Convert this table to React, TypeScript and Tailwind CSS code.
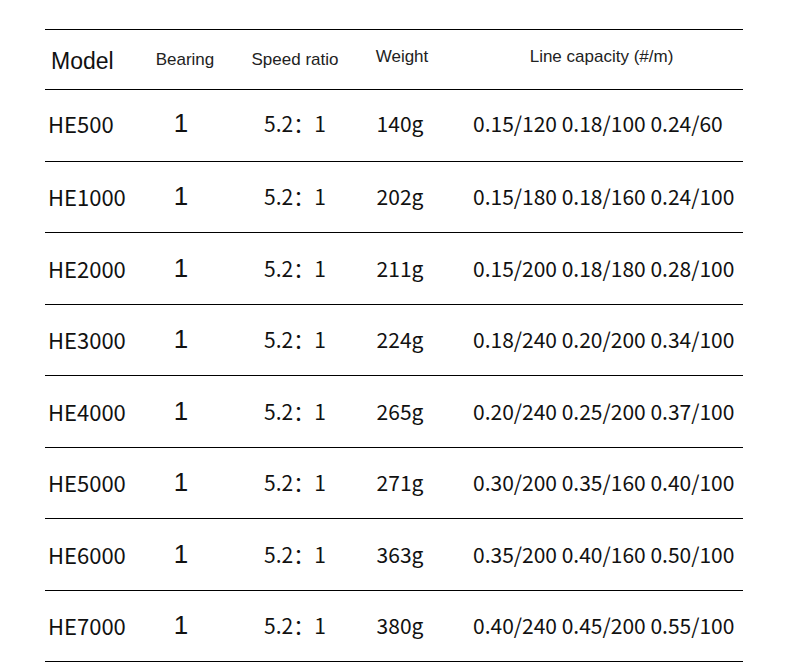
import React from "react";

const rows = [
  ["HE500", "140g", "0.15/120 0.18/100 0.24/60"],
  ["HE1000", "202g", "0.15/180 0.18/160 0.24/100"],
  ["HE2000", "211g", "0.15/200 0.18/180 0.28/100"],
  ["HE3000", "224g", "0.18/240 0.20/200 0.34/100"],
  ["HE4000", "265g", "0.20/240 0.25/200 0.37/100"],
  ["HE5000", "271g", "0.30/200 0.35/160 0.40/100"],
  ["HE6000", "363g", "0.35/200 0.40/160 0.50/100"],
  ["HE7000", "380g", "0.40/240 0.45/200 0.55/100"],
];

const cjk = { fontFamily: '"Noto Sans CJK SC", "Noto Sans", sans-serif' };
const arial = { fontFamily: '"Liberation Sans", Arial, sans-serif' };

export default function App() {
  return (
    <div className="w-[790px] h-[668px] bg-white text-black overflow-hidden">
      <div className="pt-[29px] pl-[45px]">
        <div className="w-[698px]">
          <div
            className="grid grid-cols-[95px_90px_130px_84px_299px] items-center h-[61px] border-t border-b border-black"
            style={arial}
          >
            <div className="pl-[6px] pt-[3px] text-[23px] text-[#111]">Model</div>
            <div className="text-center text-[17px] text-[#222] pt-[1px]">Bearing</div>
            <div className="text-center text-[17px] text-[#222] pt-[1px]">Speed ratio</div>
            <div className="text-center text-[17px] text-[#222] pb-[5px]">Weight</div>
            <div className="text-center text-[17px] text-[#222] pl-[16px] pb-[5px]">Line capacity (#/m)</div>
          </div>
          {rows.map(([m, w, c], i) => (
            <div
              key={m}
              className="grid grid-cols-[95px_90px_130px_84px_299px] items-center h-[71.5px] border-b border-black"
            >
              <div className={"pl-[3px] text-[22px] text-[#111] " + (i === 0 ? "pb-[4px]" : "")} style={cjk}>{m}</div>
              <div className={"text-center text-[26px] text-[#111] pr-[8px] " + (i === 0 ? "pb-[4px]" : "")} style={arial}>1</div>
              <div className={"text-center text-[21px] text-[#111] " + (i === 0 ? "pb-[4px]" : "")} style={cjk}>5.2：1</div>
              <div className={"text-center text-[21px] text-[#111] pr-[4px] " + (i === 0 ? "pb-[4px]" : "")} style={cjk}>{w}</div>
              <div className={"text-left text-[21px] text-[#111] pl-[29px] " + (i === 0 ? "pb-[4px]" : "")} style={cjk}>{c}</div>
            </div>
          ))}
        </div>
      </div>
    </div>
  );
}
